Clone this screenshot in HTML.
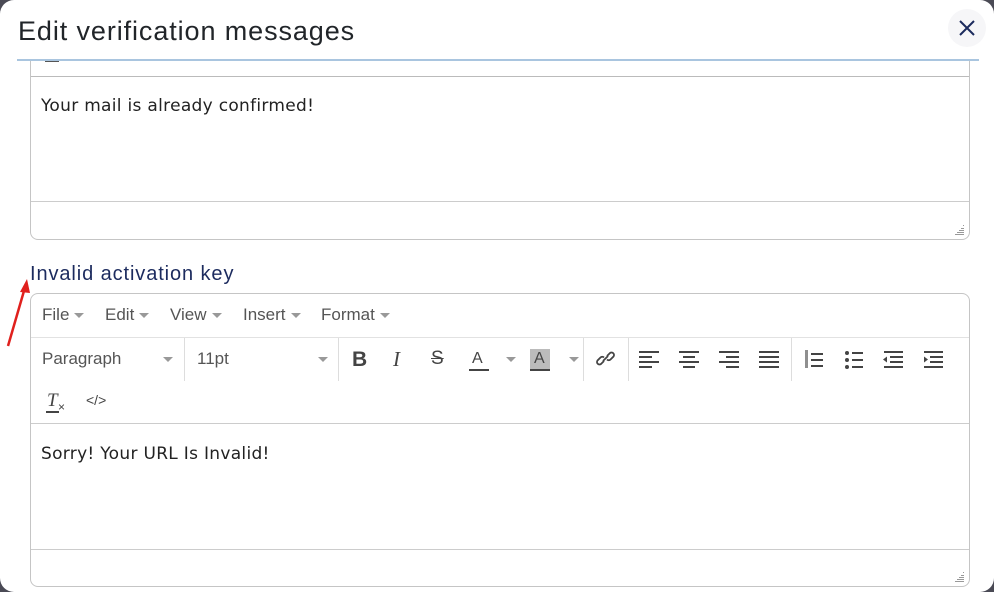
<!DOCTYPE html>
<html><head><meta charset="utf-8"><style>
*{box-sizing:border-box;margin:0;padding:0}
html,body{width:994px;height:592px;overflow:hidden;background:#4a4a55}
.modal{position:absolute;left:0;top:0;width:994px;height:592px;background:#fff;border-radius:14px;overflow:hidden}
.title{position:absolute;left:18px;top:16px;font:500 27px "Liberation Sans",sans-serif;color:#212529;letter-spacing:0.9px}
.hline{position:absolute;left:17px;top:59px;width:962px;height:2px;background:#a9c5df}
.close{position:absolute;left:948px;top:9px;width:38px;height:38px;border-radius:50%;background:#f6f6f8}
.box{position:absolute;left:30px;width:940px;border:1px solid #c5c5c5;border-radius:0 0 8px 8px;background:#fff}
.mono{font:17px "DejaVu Sans",sans-serif;color:#222;letter-spacing:0.3px}
.sep{position:absolute;left:0;right:0;height:1px;background:#ccc}
.grip{position:absolute;right:4px;bottom:4px}
.h2{position:absolute;left:30px;top:263px;font:500 20px "Liberation Sans",sans-serif;color:#1c2b5e;letter-spacing:0.9px}
.ed{position:absolute;left:30px;top:293px;width:940px;height:294px;border:1px solid #c5c5c5;border-radius:8px;background:#fff;font-family:"Liberation Sans",sans-serif;color:#555}
.m{position:absolute;top:11px;font-size:17px;color:#555}
.car{display:inline-block;width:0;height:0;border-left:5px solid transparent;border-right:5px solid transparent;border-top:5px solid #999;vertical-align:middle;margin-left:5px}
.v{position:absolute;width:1px;background:#ddd}
.ic{position:absolute}
</style></head><body>
<div class="modal">
<div class="title">Edit verification messages</div>
<div class="close"><svg width="38" height="38"><path d="M12 12L26 26M26 12L12 26" stroke="#1c2b5e" stroke-width="2"/></svg></div>
<div class="box" style="top:61px;height:179px;border-top:none">
  <div style="position:absolute;left:14px;top:-1px;width:14px;height:2px;background:#555"></div>
  <div class="sep" style="top:15px;background:#bbb"></div>
  <div class="mono" style="position:absolute;left:10px;top:35px">Your mail is already confirmed!</div>
  <div class="sep" style="top:140px"></div>
  <svg class="grip" width="10" height="10"><g fill="#999"><rect x="8" y="0" width="1" height="1"/><rect x="6" y="3" width="3" height="1"/><rect x="4" y="5" width="5" height="1"/><rect x="2" y="7" width="7" height="1"/><rect x="0" y="9" width="9" height="1"/></g></svg>
</div>
<div class="hline"></div>
<svg style="position:absolute;left:4px;top:276px" width="30" height="74"><path d="M4 70L22 8" stroke="#e0201d" stroke-width="2.5"/><path d="M23 3L16 16L26 17Z" fill="#e0201d"/></svg>
<div class="h2">Invalid activation key</div>
<div class="ed">
  <div class="m" style="left:11px">File<span class="car"></span></div>
  <div class="m" style="left:74px">Edit<span class="car"></span></div>
  <div class="m" style="left:139px">View<span class="car"></span></div>
  <div class="m" style="left:212px">Insert<span class="car"></span></div>
  <div class="m" style="left:290px">Format<span class="car"></span></div>
  <div class="sep" style="top:43px;background:#e2e2e2"></div>
  <div class="m" style="left:11px;top:55px">Paragraph</div><span class="car" style="position:absolute;left:127px;top:63px"></span>
  <div class="v" style="left:153px;top:44px;height:43px"></div>
  <div class="m" style="left:166px;top:55px">11pt</div><span class="car" style="position:absolute;left:282px;top:63px"></span>
  <div class="v" style="left:307px;top:44px;height:43px"></div>
  <div class="m" style="left:321px;top:54px;font-weight:bold;font-size:21px;color:#444">B</div>
  <div class="m" style="left:362px;top:53px;font-style:italic;font-size:21px;color:#444;font-family:'Liberation Serif',serif">I</div>
  <div class="m" style="left:400px;top:54px;font-size:19px;color:#444;text-decoration:line-through">S</div>
  <div class="m" style="left:441px;top:56px;font-size:16px;color:#444">A</div><div style="position:absolute;left:438px;top:75px;width:20px;height:2px;background:#444"></div><span class="car" style="position:absolute;left:470px;top:63px"></span>
  <div style="position:absolute;left:499px;top:55px;width:20px;height:20px;background:#bbb"></div><div class="m" style="left:503px;top:56px;font-size:16px;color:#444">A</div><div style="position:absolute;left:499px;top:75px;width:20px;height:2px;background:#444"></div><span class="car" style="position:absolute;left:533px;top:63px"></span>
  <div class="v" style="left:552px;top:44px;height:43px"></div>
  <svg class="ic" style="left:564px;top:54px" width="22" height="22"><g fill="none" stroke="#444" stroke-width="1.8"><path d="M9 13l-3 3a2.5 2.5 0 0 1-3.5-3.5l3-3a2.5 2.5 0 0 1 3.5 0"/><path d="M12 8l3-3a2.5 2.5 0 0 1 3.5 3.5l-3 3a2.5 2.5 0 0 1-3.5 0"/><path d="M8 13l5-5"/></g></svg>
  <div class="v" style="left:597px;top:44px;height:43px"></div>
  <svg class="ic" style="left:608px;top:56px" width="330" height="20"><g fill="#444">
   <rect x="0" y="1" width="20" height="2"/><rect x="0" y="6" width="13" height="2"/><rect x="0" y="11" width="20" height="2"/><rect x="0" y="16" width="13" height="2"/>
   <rect x="40" y="1" width="20" height="2"/><rect x="44" y="6" width="12" height="2"/><rect x="40" y="11" width="20" height="2"/><rect x="44" y="16" width="12" height="2"/>
   <rect x="80" y="1" width="20" height="2"/><rect x="87" y="6" width="13" height="2"/><rect x="80" y="11" width="20" height="2"/><rect x="87" y="16" width="13" height="2"/>
   <rect x="120" y="1" width="20" height="2"/><rect x="120" y="6" width="20" height="2"/><rect x="120" y="11" width="20" height="2"/><rect x="120" y="16" width="20" height="2"/>
   <rect x="172" y="3" width="12" height="2"/><rect x="172" y="9" width="12" height="2"/><rect x="172" y="15" width="12" height="2"/><rect x="166" y="0" width="3" height="18" opacity=".6"/>
   <circle cx="208" cy="3" r="2"/><circle cx="208" cy="10" r="2"/><circle cx="208" cy="17" r="2"/><rect x="213" y="2" width="11" height="2"/><rect x="213" y="9" width="11" height="2"/><rect x="213" y="16" width="11" height="2"/>
   <rect x="245" y="1" width="19" height="2"/><rect x="251" y="6" width="13" height="2"/><rect x="251" y="11" width="13" height="2"/><rect x="245" y="16" width="19" height="2"/><path d="M244 9.5l4-3v6z"/>
   <rect x="285" y="1" width="19" height="2"/><rect x="291" y="6" width="13" height="2"/><rect x="291" y="11" width="13" height="2"/><rect x="285" y="16" width="19" height="2"/><path d="M289 9.5l-4-3v6z"/>
  </g></svg>
  <div class="v" style="left:760px;top:44px;height:43px"></div>
  <div class="m" style="left:16px;top:96px;font-style:italic;font-size:19px;color:#444;font-family:'Liberation Serif',serif">T</div><div style="position:absolute;left:15px;top:117px;width:13px;height:2px;background:#444"></div><div class="m" style="left:27px;top:106px;font-size:12px;color:#444">×</div>
  <div class="m" style="left:55px;top:98px;font-size:14px;color:#444">&lt;/&gt;</div>
  <div class="sep" style="top:129px;background:#ccc"></div>
  <div class="mono" style="position:absolute;left:10px;top:150px">Sorry! Your URL Is Invalid!</div>
  <div class="sep" style="top:255px"></div>
  <svg class="grip" width="10" height="10"><g fill="#999"><rect x="8" y="0" width="1" height="1"/><rect x="6" y="3" width="3" height="1"/><rect x="4" y="5" width="5" height="1"/><rect x="2" y="7" width="7" height="1"/><rect x="0" y="9" width="9" height="1"/></g></svg>
</div>
</div>
</body></html>
